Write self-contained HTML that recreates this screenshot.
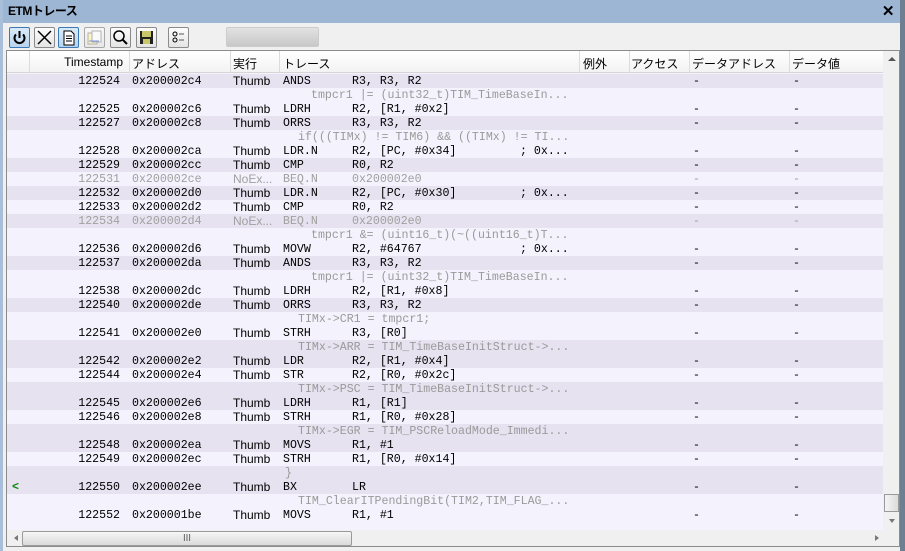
<!DOCTYPE html><html><head><meta charset="utf-8"><style>
*{margin:0;padding:0;box-sizing:border-box}
body{width:905px;height:551px;overflow:hidden;background:#c9d6e6;font-family:"Liberation Sans","Noto Sans CJK JP",sans-serif;font-size:12px;color:#000;position:relative}
#win{position:absolute;left:0;top:0;width:900px;height:551px;background:#f0f0f0;border-left:3px solid #a9bfd9}
#right{position:absolute;left:900px;top:0;width:5px;height:551px;background:#6f7f92}
#title{position:absolute;left:0;top:0;width:897px;height:23px;background:#9cb6d3;font-weight:bold;font-size:12px;line-height:23px;padding-left:5px;letter-spacing:-0.5px}
#title .x{position:absolute;right:6px;top:0;font-size:15px}
.btn{position:absolute;top:27px;width:21px;height:21px;border:1px solid #8a8a8a;background:linear-gradient(#fdfdfd,#e4e4e4);border-radius:2px}
.btn.on{background:linear-gradient(#dbeaf8,#b9d4ee);border-color:#3a79b8}
#tbl{position:absolute;left:3px;top:50px;width:894px;height:497px;background:#f4f2fc;border:1px solid #8c8c8c;overflow:hidden}
#hdr{position:absolute;left:0;top:0;width:876px;height:22px;background:linear-gradient(#fff,#f3f3f3);border-bottom:1px solid #d5d5d5}
#hdr span{position:absolute;top:4px;font-size:12px}
.dv{position:absolute;top:0;width:1px;height:22px;background:#dcdcdc}
.r{position:absolute;left:0;width:876px;height:14px;font-family:"Liberation Mono",monospace;font-size:11.6px;line-height:14px;white-space:pre}
.d{background:#e6e2f0}
.r span{position:absolute;top:1px}
.ts{right:763px}
.ad{left:125px}
.r span.th{left:226px;font-family:"Liberation Sans",sans-serif;font-size:12px;top:0;line-height:14px}
.mn{left:276px}
.op{left:345px}
.cm{left:513px}
.da{left:686px}
.dv2{left:786px}
.g{color:#a0a0a0}
.s{color:#9a9a9a}
#vs{position:absolute;left:876px;top:0;width:17px;height:479px;background:#f0f0f0}
#hs{position:absolute;left:0;top:479px;width:894px;height:17px;background:#f0f0f0}
</style></head><body>
<div id="win">
<div id="title">ETMトレース<span class="x">✕</span></div>
<div class="btn on" style="left:6px"><svg width="19" height="19"><path d="M6 6.5A5 5 0 1 0 13 6.5" fill="none" stroke="#000" stroke-width="2"/><path d="M9.5 3v7" stroke="#000" stroke-width="2"/></svg></div>
<div class="btn" style="left:31px"><svg width="19" height="19"><path d="M3 3L16 16M16 3L3 16" stroke="#000" stroke-width="1.5"/></svg></div>
<div class="btn on" style="left:55px"><svg width="19" height="19"><path d="M5 3h7l3 3v11H5z" fill="#fff" stroke="#000"/><path d="M7 8h6M7 10.5h6M7 13h6" stroke="#000"/></svg></div>
<div class="btn" style="left:81px;opacity:.7"><svg width="19" height="19"><rect x="3" y="5" width="9" height="11" fill="#fff6b0" stroke="#999"/><rect x="7" y="3" width="9" height="11" fill="#fff" stroke="#999"/><path d="M4 13h10" stroke="#4a6ad8"/></svg></div>
<div class="btn" style="left:107px"><svg width="19" height="19"><circle cx="8" cy="8" r="5" fill="none" stroke="#000" stroke-width="1.5"/><path d="M11.5 11.5L16 16" stroke="#000" stroke-width="2"/></svg></div>
<div class="btn" style="left:133px"><svg width="19" height="19"><rect x="3" y="3" width="13" height="13" fill="#222"/><rect x="5" y="3" width="9" height="6" fill="#c8c86a"/><rect x="6" y="11" width="7" height="5" fill="#c8c86a"/></svg></div>
<div class="btn" style="left:165px"><svg width="19" height="19"><circle cx="6" cy="6" r="2" fill="none" stroke="#000"/><circle cx="6" cy="12" r="2" fill="none" stroke="#000"/><path d="M10 6h5M10 12h5" stroke="#555"/></svg></div>
<div style="position:absolute;left:223px;top:27px;width:93px;height:20px;background:linear-gradient(#e2e2e2,#c8c8c8);border:1px solid #ccc;border-radius:2px"></div>
<div id="tbl">
<div id="hdr">
<div class="dv" style="left:22px"></div><span style="right:760px">Timestamp</span>
<div class="dv" style="left:122px"></div><span style="left:125px">アドレス</span>
<div class="dv" style="left:223px"></div><span style="left:226px">実行</span>
<div class="dv" style="left:272px"></div><span style="left:276px">トレース</span>
<div class="dv" style="left:572px"></div><span style="left:576px">例外</span>
<div class="dv" style="left:622px"></div><span style="left:624px">アクセス</span>
<div class="dv" style="left:682px"></div><span style="left:685px">データアドレス</span>
<div class="dv" style="left:782px"></div><span style="left:785px">データ値</span>
</div>
<div class="r d" style="top:23px"><span class="ts">122524</span><span class="ad">0x200002c4</span><span class="th">Thumb</span><span class="mn">ANDS</span><span class="op">R3, R3, R2</span><span class="da">-</span><span class="dv2">-</span></div>
<div class="r" style="top:37px"><span class="s" style="left:304px">tmpcr1 |= (uint32_t)TIM_TimeBaseIn...</span></div>
<div class="r" style="top:51px"><span class="ts">122525</span><span class="ad">0x200002c6</span><span class="th">Thumb</span><span class="mn">LDRH</span><span class="op">R2, [R1, #0x2]</span><span class="da">-</span><span class="dv2">-</span></div>
<div class="r d" style="top:65px"><span class="ts">122527</span><span class="ad">0x200002c8</span><span class="th">Thumb</span><span class="mn">ORRS</span><span class="op">R3, R3, R2</span><span class="da">-</span><span class="dv2">-</span></div>
<div class="r" style="top:79px"><span class="s" style="left:291px">if(((TIMx) != TIM6) &amp;&amp; ((TIMx) != TI...</span></div>
<div class="r" style="top:93px"><span class="ts">122528</span><span class="ad">0x200002ca</span><span class="th">Thumb</span><span class="mn">LDR.N</span><span class="op">R2, [PC, #0x34]</span><span class="cm">; 0x...</span><span class="da">-</span><span class="dv2">-</span></div>
<div class="r d" style="top:107px"><span class="ts">122529</span><span class="ad">0x200002cc</span><span class="th">Thumb</span><span class="mn">CMP</span><span class="op">R0, R2</span><span class="da">-</span><span class="dv2">-</span></div>
<div class="r g" style="top:121px"><span class="ts">122531</span><span class="ad">0x200002ce</span><span class="th">NoEx...</span><span class="mn">BEQ.N</span><span class="op">0x200002e0</span><span class="da">-</span><span class="dv2">-</span></div>
<div class="r d" style="top:135px"><span class="ts">122532</span><span class="ad">0x200002d0</span><span class="th">Thumb</span><span class="mn">LDR.N</span><span class="op">R2, [PC, #0x30]</span><span class="cm">; 0x...</span><span class="da">-</span><span class="dv2">-</span></div>
<div class="r" style="top:149px"><span class="ts">122533</span><span class="ad">0x200002d2</span><span class="th">Thumb</span><span class="mn">CMP</span><span class="op">R0, R2</span><span class="da">-</span><span class="dv2">-</span></div>
<div class="r d g" style="top:163px"><span class="ts">122534</span><span class="ad">0x200002d4</span><span class="th">NoEx...</span><span class="mn">BEQ.N</span><span class="op">0x200002e0</span><span class="da">-</span><span class="dv2">-</span></div>
<div class="r" style="top:177px"><span class="s" style="left:304px">tmpcr1 &amp;= (uint16_t)(~((uint16_t)T...</span></div>
<div class="r" style="top:191px"><span class="ts">122536</span><span class="ad">0x200002d6</span><span class="th">Thumb</span><span class="mn">MOVW</span><span class="op">R2, #64767</span><span class="cm">; 0x...</span><span class="da">-</span><span class="dv2">-</span></div>
<div class="r d" style="top:205px"><span class="ts">122537</span><span class="ad">0x200002da</span><span class="th">Thumb</span><span class="mn">ANDS</span><span class="op">R3, R3, R2</span><span class="da">-</span><span class="dv2">-</span></div>
<div class="r" style="top:219px"><span class="s" style="left:304px">tmpcr1 |= (uint32_t)TIM_TimeBaseIn...</span></div>
<div class="r" style="top:233px"><span class="ts">122538</span><span class="ad">0x200002dc</span><span class="th">Thumb</span><span class="mn">LDRH</span><span class="op">R2, [R1, #0x8]</span><span class="da">-</span><span class="dv2">-</span></div>
<div class="r d" style="top:247px"><span class="ts">122540</span><span class="ad">0x200002de</span><span class="th">Thumb</span><span class="mn">ORRS</span><span class="op">R3, R3, R2</span><span class="da">-</span><span class="dv2">-</span></div>
<div class="r" style="top:261px"><span class="s" style="left:291px">TIMx-&gt;CR1 = tmpcr1;</span></div>
<div class="r" style="top:275px"><span class="ts">122541</span><span class="ad">0x200002e0</span><span class="th">Thumb</span><span class="mn">STRH</span><span class="op">R3, [R0]</span><span class="da">-</span><span class="dv2">-</span></div>
<div class="r d" style="top:289px"><span class="s" style="left:291px">TIMx-&gt;ARR = TIM_TimeBaseInitStruct-&gt;...</span></div>
<div class="r d" style="top:303px"><span class="ts">122542</span><span class="ad">0x200002e2</span><span class="th">Thumb</span><span class="mn">LDR</span><span class="op">R2, [R1, #0x4]</span><span class="da">-</span><span class="dv2">-</span></div>
<div class="r" style="top:317px"><span class="ts">122544</span><span class="ad">0x200002e4</span><span class="th">Thumb</span><span class="mn">STR</span><span class="op">R2, [R0, #0x2c]</span><span class="da">-</span><span class="dv2">-</span></div>
<div class="r d" style="top:331px"><span class="s" style="left:291px">TIMx-&gt;PSC = TIM_TimeBaseInitStruct-&gt;...</span></div>
<div class="r d" style="top:345px"><span class="ts">122545</span><span class="ad">0x200002e6</span><span class="th">Thumb</span><span class="mn">LDRH</span><span class="op">R1, [R1]</span><span class="da">-</span><span class="dv2">-</span></div>
<div class="r" style="top:359px"><span class="ts">122546</span><span class="ad">0x200002e8</span><span class="th">Thumb</span><span class="mn">STRH</span><span class="op">R1, [R0, #0x28]</span><span class="da">-</span><span class="dv2">-</span></div>
<div class="r d" style="top:373px"><span class="s" style="left:291px">TIMx-&gt;EGR = TIM_PSCReloadMode_Immedi...</span></div>
<div class="r d" style="top:387px"><span class="ts">122548</span><span class="ad">0x200002ea</span><span class="th">Thumb</span><span class="mn">MOVS</span><span class="op">R1, #1</span><span class="da">-</span><span class="dv2">-</span></div>
<div class="r" style="top:401px"><span class="ts">122549</span><span class="ad">0x200002ec</span><span class="th">Thumb</span><span class="mn">STRH</span><span class="op">R1, [R0, #0x14]</span><span class="da">-</span><span class="dv2">-</span></div>
<div class="r d" style="top:415px"><span class="s" style="left:278px">}</span></div>
<div class="r d" style="top:429px"><span style="left:5px;color:#0a8a0a;font-weight:bold">&lt;</span><span class="ts">122550</span><span class="ad">0x200002ee</span><span class="th">Thumb</span><span class="mn">BX</span><span class="op">LR</span><span class="da">-</span><span class="dv2">-</span></div>
<div class="r" style="top:443px"><span class="s" style="left:291px">TIM_ClearITPendingBit(TIM2,TIM_FLAG_...</span></div>
<div class="r" style="top:457px"><span class="ts">122552</span><span class="ad">0x200001be</span><span class="th">Thumb</span><span class="mn">MOVS</span><span class="op">R1, #1</span><span class="da">-</span><span class="dv2">-</span></div>
<div id="vs"><div style="position:absolute;left:5px;top:6px;width:0;height:0;border-left:4px solid transparent;border-right:4px solid transparent;border-bottom:4px solid #555"></div>
<div style="position:absolute;left:1px;top:443px;width:15px;height:18px;border:1px solid #9a9a9a;background:linear-gradient(90deg,#f4f4f4,#dcdcdc)"></div>
<div style="position:absolute;left:6px;top:468px;width:0;height:0;border-left:3px solid transparent;border-right:3px solid transparent;border-top:4px solid #777"></div></div>
<div id="hs"><div style="position:absolute;left:7px;top:5px;width:0;height:0;border-top:3px solid transparent;border-bottom:3px solid transparent;border-right:4px solid #777"></div>
<div style="position:absolute;left:15px;top:1px;width:330px;height:15px;border:1px solid #9a9a9a;border-radius:2px;background:linear-gradient(#f6f6f6,#dadada);text-align:center;font-size:9px;line-height:13px;color:#555">Ⅲ</div>
<div style="position:absolute;left:868px;top:5px;width:0;height:0;border-top:3px solid transparent;border-bottom:3px solid transparent;border-left:4px solid #777"></div></div>
</div>
</div>
<div id="right"></div>
</body></html>
